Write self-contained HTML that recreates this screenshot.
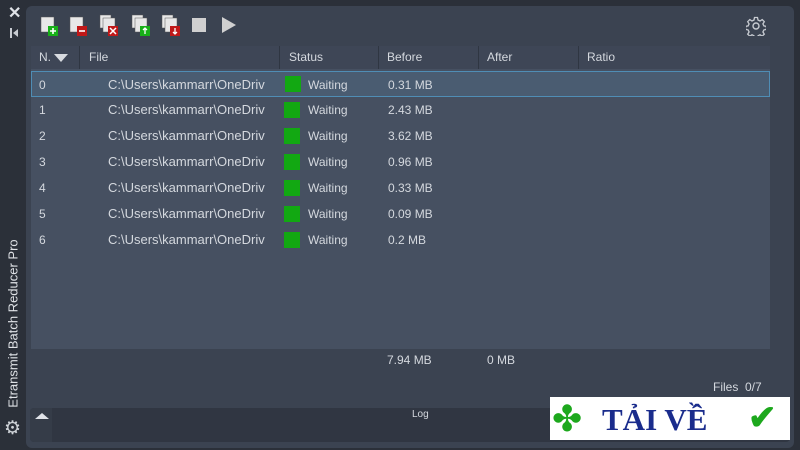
<!DOCTYPE html>
<html><head><style>
*{margin:0;padding:0;box-sizing:border-box}
body{width:800px;height:450px;background:#2b3039;font-family:"Liberation Sans",sans-serif;position:relative;overflow:hidden;color:#d4d8de}
.panel{position:absolute;left:26px;top:6px;width:768px;height:442px;background:#3b4351;border-radius:6px}
.tbl{position:absolute;left:31px;top:46px;width:739px;height:303px;background:#465061}
.hdr{position:absolute;left:31px;top:46px;width:739px;height:23px;background:#3e4656;font-size:12px}
.hdr div{position:absolute;top:0;height:23px;line-height:23px;border-right:1px solid #2f3642;padding-left:8px}
.row{position:absolute;left:31px;width:739px;height:26px;font-size:12px;line-height:26px}
.row span{position:absolute}
.sel{background:#4a5c71;border:1px solid #4f8db5}
.g{width:16px;height:16px;background:#12a812;top:5px;left:253px}
</style></head><body>
<div style="position:absolute;left:8px;top:3px;font-size:16px;font-weight:bold;color:#e0e3e8">✕</div>
<div style="position:absolute;left:10px;top:28px;width:2px;height:10px;background:#c8ccd2"></div>
<div style="position:absolute;left:13px;top:29px;width:0;height:0;border-top:4px solid transparent;border-bottom:4px solid transparent;border-right:5px solid #c8ccd2"></div>
<div style="position:absolute;left:-87px;top:316px;width:200px;transform:rotate(-90deg);font-size:13px;color:#dfe2e6;text-align:center">Etransmit Batch Reducer Pro</div>
<div style="position:absolute;left:4px;top:419px;font-size:19px;color:#cfd3d8;line-height:20px">⚙</div>
<div class="panel"></div>
<svg style="position:absolute;left:38px;top:14px" width="210" height="24">
<g fill="#e8e8e8" stroke="#555" stroke-width=".5">
<rect x="3" y="3" width="13" height="15"/>
<rect x="32" y="3" width="13" height="15"/>
<rect x="62" y="1" width="11" height="13"/><rect x="65" y="4" width="12" height="14"/>
<rect x="94" y="1" width="11" height="13"/><rect x="97" y="4" width="12" height="14"/>
<rect x="124" y="1" width="11" height="13"/><rect x="127" y="4" width="12" height="14"/>
</g>
<rect x="10" y="12" width="10" height="10" fill="#18b018"/><path d="M15 14v6M12 17h6" stroke="#fff" stroke-width="1.6"/>
<rect x="39" y="12" width="10" height="10" fill="#c01818"/><path d="M41 17h6" stroke="#fff" stroke-width="1.6"/>
<rect x="70" y="12" width="10" height="10" fill="#c01818"/><path d="M72 14l6 6M78 14l-6 6" stroke="#fff" stroke-width="1.5"/>
<rect x="102" y="12" width="10" height="10" fill="#18b018"/><path d="M107 14v6M105 16l2-2 2 2" stroke="#fff" stroke-width="1.3" fill="none"/>
<rect x="132" y="12" width="10" height="10" fill="#c01818"/><path d="M137 14v6M135 18l2 2 2-2" stroke="#fff" stroke-width="1.3" fill="none"/>
<rect x="154" y="4" width="14" height="14" fill="#d0d0d0"/>
<path d="M184 3l14 8-14 8z" fill="#d0d0d0"/>
</svg>
<svg style="position:absolute;left:746px;top:16px" width="20" height="20" viewBox="0 0 20 20"><circle cx="10" cy="10" r="3" fill="none" stroke="#c8ccd2" stroke-width="1.4"/><path d="M8.5 1.5h3l.5 2.5 2 1 2.2-1.4 2.1 2.1-1.4 2.2 1 2 2.5.5v3l-2.5.5-1 2 1.4 2.2-2.1 2.1-2.2-1.4-2 1-.5 2.5h-3l-.5-2.5-2-1-2.2 1.4-2.1-2.1 1.4-2.2-1-2-2.5-.5v-3l2.5-.5 1-2-1.4-2.2 2.1-2.1 2.2 1.4 2-1z" fill="none" stroke="#c8ccd2" stroke-width="1.3"/></svg>
<div class="tbl"></div>
<div class="hdr">
<div style="left:0;width:49px">N. <span style="display:inline-block;width:0;height:0;border-left:7px solid transparent;border-right:7px solid transparent;border-top:8px solid #d8dbe0;vertical-align:middle"></span></div>
<div style="left:50px;width:199px">File</div>
<div style="left:250px;width:98px">Status</div>
<div style="left:348px;width:100px">Before</div>
<div style="left:448px;width:100px">After</div>
<div style="left:548px;width:191px;border:none">Ratio</div>
</div>
<div class="row sel" style="top:71px"><span style="left:7px">0</span><span style="left:76px;font-size:13px">C:\Users\kammarr\OneDriv</span><span class="g" style="top:4px"></span><span style="left:276px">Waiting</span><span style="left:356px">0.31 MB</span></div>
<div class="row" style="top:97px"><span style="left:8px">1</span><span style="left:77px;font-size:13px">C:\Users\kammarr\OneDriv</span><span class="g"></span><span style="left:277px">Waiting</span><span style="left:357px">2.43 MB</span></div>
<div class="row" style="top:123px"><span style="left:8px">2</span><span style="left:77px;font-size:13px">C:\Users\kammarr\OneDriv</span><span class="g"></span><span style="left:277px">Waiting</span><span style="left:357px">3.62 MB</span></div>
<div class="row" style="top:149px"><span style="left:8px">3</span><span style="left:77px;font-size:13px">C:\Users\kammarr\OneDriv</span><span class="g"></span><span style="left:277px">Waiting</span><span style="left:357px">0.96 MB</span></div>
<div class="row" style="top:175px"><span style="left:8px">4</span><span style="left:77px;font-size:13px">C:\Users\kammarr\OneDriv</span><span class="g"></span><span style="left:277px">Waiting</span><span style="left:357px">0.33 MB</span></div>
<div class="row" style="top:201px"><span style="left:8px">5</span><span style="left:77px;font-size:13px">C:\Users\kammarr\OneDriv</span><span class="g"></span><span style="left:277px">Waiting</span><span style="left:357px">0.09 MB</span></div>
<div class="row" style="top:227px"><span style="left:8px">6</span><span style="left:77px;font-size:13px">C:\Users\kammarr\OneDriv</span><span class="g"></span><span style="left:277px">Waiting</span><span style="left:357px">0.2 MB</span></div>
<div style="position:absolute;left:387px;top:353px;font-size:12px">7.94 MB</div>
<div style="position:absolute;left:487px;top:353px;font-size:12px">0 MB</div>
<div style="position:absolute;left:713px;top:380px;font-size:12px">Files &nbsp;0/7</div>
<div style="position:absolute;left:30px;top:408px;width:760px;height:34px;background:#303642;border-radius:4px"></div>
<div style="position:absolute;left:30px;top:408px;width:22px;height:34px;background:#353c48;border-radius:4px 0 0 4px"></div>
<div style="position:absolute;left:35px;top:413px;width:0;height:0;border-left:7px solid transparent;border-right:7px solid transparent;border-bottom:6px solid #e0e3e8"></div>
<div style="position:absolute;left:412px;top:409px;font-size:10px">Log</div>
<div style="position:absolute;left:550px;top:397px;width:240px;height:43px;background:#fff"></div>
<div style="position:absolute;left:552px;top:397px;font-size:36px;color:#1da81d;line-height:43px">✤</div>
<div style="position:absolute;left:602px;top:398px;font-family:'Liberation Serif',serif;font-size:31px;font-weight:bold;color:#1a2c8c;line-height:43px">TẢI VỀ</div>
<div style="position:absolute;left:748px;top:397px;font-size:34px;color:#1da81d;line-height:43px;font-weight:bold">✔</div>
</body></html>
